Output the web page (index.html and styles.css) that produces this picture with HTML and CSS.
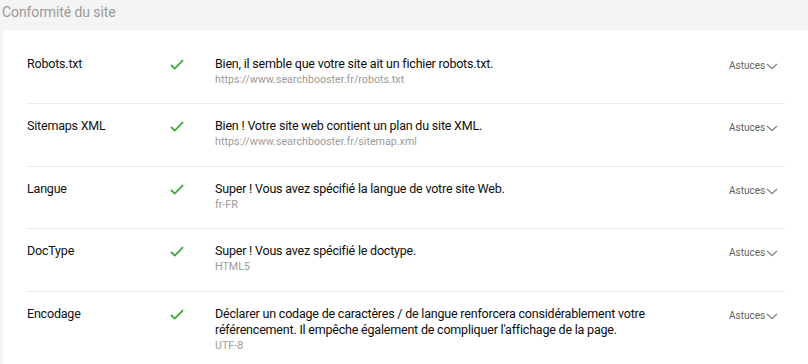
FILE: index.html
```html
<!DOCTYPE html>
<html lang="fr">
<head>
    <meta charset="UTF-8">
    <title>Conformité du site</title>
    <link rel="stylesheet" href="styles.css">
</head>
<body>
    <h2 class="section-title">Conformité du site</h2>

    <div class="card">
        <!-- Robots -->
        <div class="check-row">
            <div class="check-label">Robots.txt</div>
            <div class="check-icon">
                <svg width="14" height="11" viewBox="0 0 14 11"><path d="M1 6 L4.8 9.6 L13 1.2" fill="none" stroke="#3aaa35" stroke-width="1.8"/></svg>
            </div>
            <div class="check-message">
                <p class="msg">Bien, il semble que votre site ait un fichier robots.txt.</p>
                <p class="detail">https://www.searchbooster.fr/robots.txt</p>
            </div>
            <div class="tips">Astuces<svg class="chevron" width="12" height="7" viewBox="0 0 12 7"><path d="M1 1 L6 5.5 L11 1" fill="none" stroke="#8a8a8a" stroke-width="1.4"/></svg></div>
        </div>

        <!-- Sitemap -->
        <div class="check-row">
            <div class="check-label">Sitemaps XML</div>
            <div class="check-icon">
                <svg width="14" height="11" viewBox="0 0 14 11"><path d="M1 6 L4.8 9.6 L13 1.2" fill="none" stroke="#3aaa35" stroke-width="1.8"/></svg>
            </div>
            <div class="check-message">
                <p class="msg">Bien ! Votre site web contient un plan du site XML.</p>
                <p class="detail">https://www.searchbooster.fr/sitemap.xml</p>
            </div>
            <div class="tips">Astuces<svg class="chevron" width="12" height="7" viewBox="0 0 12 7"><path d="M1 1 L6 5.5 L11 1" fill="none" stroke="#8a8a8a" stroke-width="1.4"/></svg></div>
        </div>

        <!-- Langue -->
        <div class="check-row">
            <div class="check-label">Langue</div>
            <div class="check-icon">
                <svg width="14" height="11" viewBox="0 0 14 11"><path d="M1 6 L4.8 9.6 L13 1.2" fill="none" stroke="#3aaa35" stroke-width="1.8"/></svg>
            </div>
            <div class="check-message">
                <p class="msg">Super ! Vous avez spécifié la langue de votre site Web.</p>
                <p class="detail">fr-FR</p>
            </div>
            <div class="tips">Astuces<svg class="chevron" width="12" height="7" viewBox="0 0 12 7"><path d="M1 1 L6 5.5 L11 1" fill="none" stroke="#8a8a8a" stroke-width="1.4"/></svg></div>
        </div>

        <!-- Doctype -->
        <div class="check-row">
            <div class="check-label">DocType</div>
            <div class="check-icon">
                <svg width="14" height="11" viewBox="0 0 14 11"><path d="M1 6 L4.8 9.6 L13 1.2" fill="none" stroke="#3aaa35" stroke-width="1.8"/></svg>
            </div>
            <div class="check-message">
                <p class="msg">Super ! Vous avez spécifié le doctype.</p>
                <p class="detail">HTML5</p>
            </div>
            <div class="tips">Astuces<svg class="chevron" width="12" height="7" viewBox="0 0 12 7"><path d="M1 1 L6 5.5 L11 1" fill="none" stroke="#8a8a8a" stroke-width="1.4"/></svg></div>
        </div>

        <!-- Encodage -->
        <div class="check-row">
            <div class="check-label">Encodage</div>
            <div class="check-icon">
                <svg width="14" height="11" viewBox="0 0 14 11"><path d="M1 6 L4.8 9.6 L13 1.2" fill="none" stroke="#3aaa35" stroke-width="1.8"/></svg>
            </div>
            <div class="check-message">
                <p class="msg">Déclarer un codage de caractères / de langue renforcera considérablement votre référencement. Il empêche également de compliquer l'affichage de la page.</p>
                <p class="detail">UTF-8</p>
            </div>
            <div class="tips">Astuces<svg class="chevron" width="12" height="7" viewBox="0 0 12 7"><path d="M1 1 L6 5.5 L11 1" fill="none" stroke="#8a8a8a" stroke-width="1.4"/></svg></div>
        </div>
    </div>
</body>
</html>
```

FILE: styles.css
```css
* {
    margin: 0;
    padding: 0;
    box-sizing: border-box;
}

body {
    font-family: Roboto, 'Liberation Sans', sans-serif;
    background: #f4f4f4;
    color: #1a1a1a;
    overflow: hidden;
}

.section-title {
    font-size: 14px;
    font-weight: 400;
    letter-spacing: -0.1px;
    color: #9a9a9a;
    padding: 4px 0 0 2px;
    height: 30px;
}

.card {
    background: #fff;
    margin-left: 3px;
    padding: 11.5px 23px 0 24px;
}

.check-row {
    display: grid;
    grid-template-columns: 143px 45px 1fr 56px;
    align-items: start;
    padding: 14px 0 15.5px;
    border-bottom: 1px solid #ececec;
    font-size: 12.5px;
    letter-spacing: -0.2px;
    line-height: 16px;
}

.check-label {
    color: #111;
}

.check-icon {
    padding-top: 3px;
}

.check-icon svg {
    display: block;
}

.check-message {
    max-width: 450px;
}

.msg {
    color: #0d0d0d;
}

.detail {
    font-size: 10.7px;
    letter-spacing: 0;
    color: #9b9b9b;
}

.tips {
    font-size: 10px;
    letter-spacing: 0;
    color: #5f5f5f;
    padding-top: 2px;
    display: flex;
    align-items: center;
}

.chevron {
    display: block;
    margin: 1px 0 0 1px;
}
```
